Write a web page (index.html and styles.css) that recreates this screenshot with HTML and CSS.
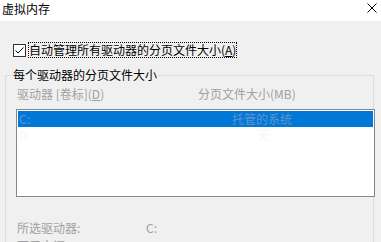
FILE: index.html
```html
<!DOCTYPE html>
<html lang="zh-CN">
<head>
<meta charset="utf-8">
<title>虚拟内存</title>
<link rel="stylesheet" href="styles.css">
</head>
<body>
<div class="window">
  <div class="titlebar">
    <span class="title">虚拟内存</span>
    <svg class="close" width="10" height="10" viewBox="0 0 10 10"><path d="M0.5 0.5 L9.5 9.5 M9.5 0.5 L0.5 9.5" stroke="#000" stroke-width="1" fill="none"/></svg>
  </div>
  <div class="auto-row">
    <svg class="checkbox" width="13" height="13" viewBox="0 0 13 13"><rect x="0.5" y="0.5" width="12" height="12" fill="#fff" stroke="#333"/><path d="M2.5 6.5 L5 9 L10.5 3.5" stroke="#000" stroke-width="1" fill="none"/></svg>
    <span class="auto-label">自动管理所有驱动器的分页文件大小(<u>A</u>)</span>
  </div>
  <fieldset class="group">
    <legend class="group-title">每个驱动器的分页文件大小</legend>
    <div class="group-body">
      <div class="cols">
        <span class="col-drive">驱动器 [卷标](<u>D</u>)</span>
        <span class="col-size">分页文件大小(MB)</span>
      </div>
      <div class="listbox">
        <div class="row selected"><span class="cell-drive">C:</span><span class="cell-size">托管的系统</span></div>
        <div class="row faint"><span class="cell-drive">D:</span><span class="cell-size faint-size">无</span></div>
      </div>
      <div class="info">
        <div class="info-row"><span class="info-key">所选驱动器:</span><span class="info-val">C:</span></div>
        <div class="info-row"><span class="info-key">可用空间:</span><span class="info-val"></span></div>
      </div>
    </div>
  </fieldset>
</div>
</body>
</html>
```
FILE: styles.css
```css
html, body {
  margin: 0;
  padding: 0;
}
body {
  width: 381px;
  height: 242px;
  overflow: hidden;
  background: #f0f0f0;
  font-family: "Noto Sans CJK SC", "Noto Sans", sans-serif;
  font-size: 12px;
  line-height: 16px;
  color: #000;
}
.window {
  display: flex;
  flex-direction: column;
}
.titlebar {
  height: 21px;
  background: #fff;
  display: flex;
  justify-content: space-between;
  align-items: flex-start;
}
.title {
  padding: 1px 0 0 2px;
}
.close {
  margin: 3px 4px 0 0;
}
.auto-row {
  margin-top: 21px;
  display: flex;
  align-items: center;
  height: 16px;
  padding-left: 13px;
}
.checkbox {
  display: block;
  margin-top: 1px;
}
.auto-label {
  margin-left: 2px;
  outline: 1px dotted #000;
  outline-offset: -1px;
  padding: 0 1px 0 1px;
  height: 16px;
}
.auto-label u {
  text-underline-offset: 1px;
}
.group {
  margin: 9px 7px 0 5px;
  border: 1px solid #dcdcdc;
  padding: 0 0 0 6px;
  min-width: 0;
}
.group-title {
  padding: 0 1px;
  line-height: 16px;
}
.group-body {
  padding-left: 4px;
  padding-top: 3px;
}
.cols {
  display: flex;
  color: #a0a0a0;
  padding-left: 1px;
}
.col-drive {
  width: 181px;
}
.listbox {
  margin-top: 7px;
  margin-right: -2px;
  height: 88px;
  box-sizing: border-box;
  border: 1px solid #828790;
  background: #fff;
  padding: 1px;
}
.row {
  display: flex;
  height: 16px;
}
.row.selected {
  background: #0078d7;
  color: #6393cb;
}
.row.faint {
  color: #f6f6f6;
}
.cell-drive {
  width: 213px;
  padding-left: 1px;
}
.faint-size {
  padding-left: 26px;
}
.info {
  margin-top: 23px;
  color: #a0a0a0;
}
.info-row {
  display: flex;
  height: 16px;
  margin-bottom: 2px;
  padding-left: 1px;
}
.info-key {
  width: 129px;
}
```
